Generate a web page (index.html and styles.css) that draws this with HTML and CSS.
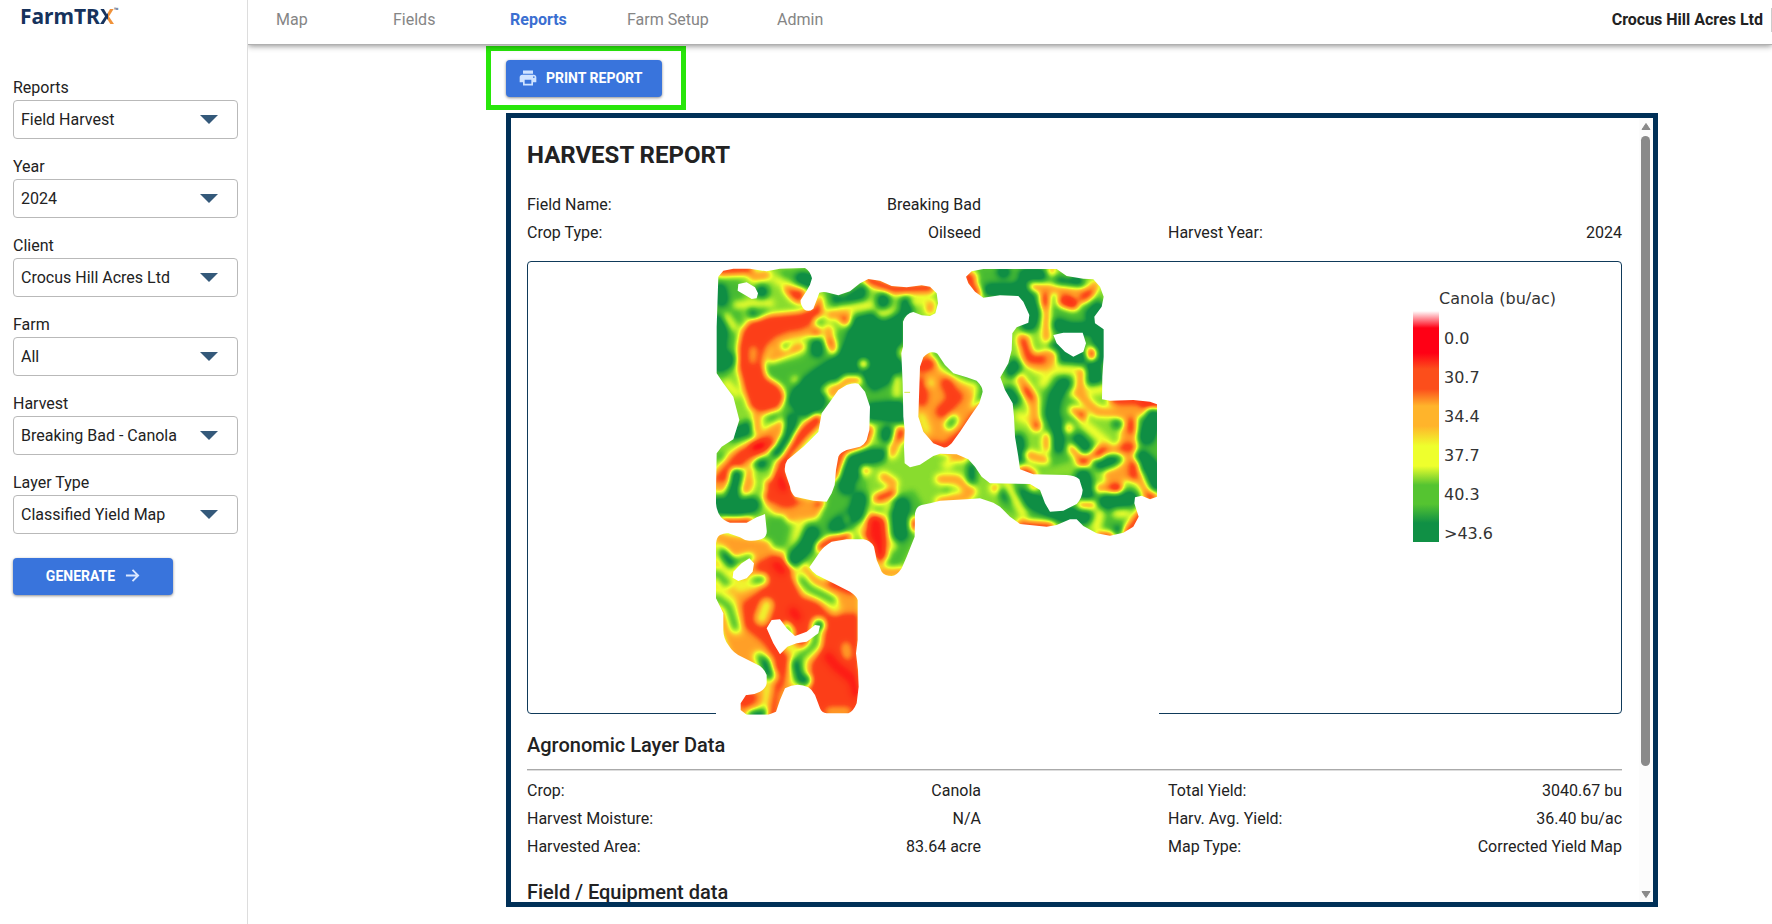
FILE: index.html
```html
<!DOCTYPE html>
<html lang="en">
<head>
<meta charset="utf-8">
<title>FarmTRX - Harvest Report</title>
<link rel="stylesheet" href="styles.css">
</head>
<body>
<aside class="sidebar">
  <a class="logo" href="#">FarmTR<span class="logo-x">X</span><span class="logo-tm">™</span></a>
  <form class="filters">
    <div class="field"><label for="reports">Reports</label>
      <div class="picker"><select id="reports"><option>Field Harvest</option></select><span class="arrow"></span></div></div>
    <div class="field"><label for="year">Year</label>
      <div class="picker"><select id="year"><option>2024</option></select><span class="arrow"></span></div></div>
    <div class="field"><label for="client">Client</label>
      <div class="picker"><select id="client"><option>Crocus Hill Acres Ltd</option></select><span class="arrow"></span></div></div>
    <div class="field"><label for="farm">Farm</label>
      <div class="picker"><select id="farm"><option>All</option></select><span class="arrow"></span></div></div>
    <div class="field"><label for="harvest">Harvest</label>
      <div class="picker"><select id="harvest"><option>Breaking Bad - Canola</option></select><span class="arrow"></span></div></div>
    <div class="field"><label for="layer">Layer Type</label>
      <div class="picker"><select id="layer"><option>Classified Yield Map</option></select><span class="arrow"></span></div></div>
    <button class="btn generate" type="button">GENERATE
      <svg class="icon-arrow" viewBox="0 0 16 16" aria-hidden="true"><path d="M1 8h13M8 2l6 6-6 6"/></svg>
    </button>
  </form>
</aside>
<div class="main">
  <header class="topbar">
    <nav class="nav">
      <a href="#">Map</a><a href="#">Fields</a><a href="#" class="active">Reports</a><a href="#">Farm Setup</a><a href="#">Admin</a>
    </nav>
    <div class="account">Crocus Hill Acres Ltd</div>
  </header>
  <main class="content">
    <div class="highlight">
      <button class="btn print" type="button">
        <svg class="icon-print" viewBox="0 0 24 24" aria-hidden="true"><path d="M19 8H5c-1.660 0-3 1.340-3 3v6h4v4h12v-4h4v-6c0-1.660-1.340-3-3-3zm-3 11H8v-5h8v5zm3-7c-.550 0-1-.450-1-1s.450-1 1-1 1 .450 1 1-.450 1-1 1zm-1-9H6v4h12V3z"/></svg>
        PRINT REPORT
      </button>
    </div>
    <section class="panel">
      <div class="report">
        <h1>HARVEST REPORT</h1>
        <div class="columns">
          <dl>
            <div><dt>Field Name:</dt><dd>Breaking Bad</dd></div>
            <div><dt>Crop Type:</dt><dd>Oilseed</dd></div>
          </dl>
          <dl class="bottom">
            <div><dt>Harvest Year:</dt><dd>2024</dd></div>
          </dl>
        </div>
        <div class="map-frame">
          <svg class="yield-map" viewBox="48 36 1329 1365" role="img" aria-label="Classified yield map">
            <defs>
              <filter id="classify" filterUnits="userSpaceOnUse" x="0" y="0" width="1440" height="1440" color-interpolation-filters="sRGB">
                <feGaussianBlur stdDeviation="9"/>
                <feComponentTransfer>
                  <feFuncR type="table" tableValues="1 .99 .99 1 1 .93 .62 .33 .2 .06 .06"/>
                  <feFuncG type="table" tableValues="0 .2 .27 .55 .72 1 .9 .77 .67 .56 .56"/>
                  <feFuncB type="table" tableValues=".08 .09 .1 .14 .17 .18 .18 .19 .22 .27 .27"/>
                </feComponentTransfer>
              </filter>
              <clipPath id="boundary">
                <path clip-rule="evenodd" d="M50 370V230L55 80 70 62 100 56 150 56 200 64 240 56 315 54Q330 62 336 85 332 105 320 122L302 150Q300 162 312 178 325 188 340 176L350 150 358 128Q372 124 385 128L415 136 450 124 480 100 505 87 540 92 575 108 620 112 665 106 690 110 710 130 714 160 706 190 690 198 665 196 640 186Q618 190 609 215V290L604 310 608 400 610 500 614 540 612 590 614 640 630 652 660 644 700 618 720 611 770 613 805 628 825 650 845 680 870 700 990 702 1020 720 1035 760 1050 785 1090 782 1130 762Q1146 745 1148 720L1138 688Q1125 676 1100 675L1000 673 960 658 955 620 945 560 942 500 938 460 915 420 901 382 925 340 935 300 937 250 950 232 985 218 988 195 970 155 955 138 900 136 850 143 825 125 805 100 798 80 815 64 850 57H1070L1100 78 1150 86 1180 88 1200 110 1211 140 1205 170 1183 200 1185 220 1211 238V320L1207 380 1206 448 1230 452 1300 450 1350 455 1371 463V740L1350 748 1325 737 1305 742 1303 760 1316 800 1300 830 1270 848 1230 857 1190 850 1150 828 1130 808H1110L1070 825 1040 830 960 822 930 800 900 770 880 758 840 745 800 748 720 752 690 760 665 765Q648 770 645 790L644 860 620 920 605 955Q590 978 575 978 555 978 545 965L530 930 522 890Q510 870 490 868H440L395 875Q370 890 360 905L328 952Q335 965 350 975L400 1000 450 1025Q470 1038 473 1050V1170L468 1210 474 1260 476 1310 470 1360Q460 1385 445 1390H380Q365 1388 360 1375L345 1335Q335 1318 325 1312 290 1295 255 1315L240 1350 228 1385 205 1394H140L122 1380V1360L138 1335Q160 1336 180 1325 198 1315 200 1300V1275Q195 1260 180 1248L125 1220Q100 1210 85 1185 70 1165 70 1140V1090L48 1045V880Q50 860 60 855 75 848 85 850L120 862Q135 873 150 872 175 873 190 865 202 855 200 840L195 792 170 802 140 818H90Q70 810 62 800 50 785 48 760V720L50 610 65 590 100 568 118 510 100 440 70 400Z
                M115 102L140 97 165 112 174 130 170 145 155 147 135 135 113 122Z
                M440 405Q460 398 475 401L495 425 510 470 508 540 500 570Q492 585 480 590L440 600Q420 608 415 620L408 660 404 705 395 730 380 755 340 752 285 740Q272 728 270 710L255 665Q252 645 262 630L310 590 355 545 365 490 390 455 415 420Z
                M660 350L670 322Q685 307 695 307 710 306 715 315L735 345 760 370 800 382 830 392Q848 410 848 425L838 460 810 500 780 545 755 580Q740 595 730 592L700 580 670 545 655 500Z
                M1060 255L1090 248H1148L1158 280 1150 305 1120 320 1095 305 1070 280Z
                M100 965L125 940 148 925 162 940 158 965 140 985 115 993 98 983Z
                M200 1135L215 1110 240 1108 260 1135 285 1158 320 1145 345 1125 360 1127 355 1150 320 1175 290 1180 262 1190 240 1213 220 1180Z"/>
              </clipPath>
            </defs>
            <g clip-path="url(#boundary)">
              <g filter="url(#classify)">
                <rect class="base" width="1440" height="1440"/>
                <!-- north-west block -->
                <path class="area g" d="M40 90H120L140 170 100 230 120 330 70 390 40 370ZM190 350L300 325 360 280 450 220 610 180V530L500 500 350 520 220 480 260 410 190 380ZM240 60H345V110L300 130 240 110ZM370 120L500 95V150L400 175Z"/>
                <path class="area d" d="M40 190L70 200 85 240 78 300 105 318 102 345 70 365H40ZM460 200L520 185 550 215 610 180V370L570 400 520 425 490 390 440 372 400 400 375 460 350 505 295 495 260 450 290 400 340 360 400 320 430 285 445 240ZM500 460L610 450V520L500 510ZM390 130L430 145 500 100 498 145 440 160 400 162ZM100 530L165 505 175 550 130 562 90 575ZM425 620L500 595 570 595 550 635 490 650 475 700 485 740 415 740Z"/>
                <path class="d w40" d="M550 148v10M620 160v20M305 85l25 8M185 125h1M165 185l20-4M350 285v20M60 120l5 30M275 510L262 555 232 605M107 670L98 740M560 545v15M600 480v20"/>
                <path class="g w24" d="M115 212h1M330 330h10M200 355L260 370 240 400"/>
                <path class="y w24" d="M285 390h1M375 420l20-15M80 400L110 430M590 385v50M605 300v15"/>
                <path class="a w30" d="M390 195L440 190 440 215M345 240L240 260 190 300M385 240L390 270 400 300M300 290L215 322M200 75L160 80M690 160v20M600 540L575 610M495 660h1M550 680l30 20M395 435L440 390 475 390M170 500v40"/>
                <path class="y w24" d="M510 165L420 175M540 190L570 185M300 120L230 90M210 160L110 165M640 155L680 150M80 200L100 230M355 215h1M255 285h1"/>
                <path class="area o" d="M148 212L200 195 300 185 340 170 362 130 370 190 335 225 300 240 265 245 225 262 195 290 190 340 200 380 240 405 258 440 240 478 190 492 150 478 130 420 112 350 112 290 125 240ZM245 112L320 120 305 165 275 150Z"/>
                <path class="a w24" d="M160 300L160 330M255 270L230 305"/>
                <path class="a w30" d="M490 342h1M495 660h1"/>
                <path class="g w24" d="M355 215h1M255 288h1M175 183h20"/>
                <path class="o w30" d="M60 62L145 58M505 90L580 118 690 114"/>
                <path class="o w24" d="M430 208h1M390 278h1M180 327h1M350 248h1"/>
                <path class="a w60" d="M240 540L180 590 110 630 60 690"/>
                <path class="o w40" d="M240 560L180 590 130 615 55 700M350 510L310 550 260 610 235 690 210 740"/>
                <path class="a w24" d="M240 520L225 560M150 660L130 720"/>
                <path class="g w30" d="M180 642L200 632M225 500l-10 5M60 620h1"/>
                <path class="d w30" d="M275 510L262 560 232 608M107 670L98 740M180 642h8"/>
                <path class="o w30" d="M505 540L490 580 430 600 408 660 400 735M605 545l-5 15"/>
                <path class="r w30" d="M185 585l-20 5M250 690v50"/>
                <!-- central plot -->
                <path class="area a" d="M640 290H860V600H640Z"/>
                <path class="g w30" d="M705 310L735 345 790 375 845 390 848 430 830 470"/>
                <path class="y w16" d="M715 350L750 378 810 405 825 430M690 390v15"/>
                <path class="o w40" d="M665 350L690 340M665 400V450M770 440L725 485M740 400l20 40"/>
                <path class="y w30" d="M690 400h1M665 500L680 540"/>
                <path class="g w30" d="M760 510l-12 15"/>
                <path class="o w30" d="M845 470L795 545 735 595 700 585"/>
                <!-- north-east block -->
                <g transform="translate(720 0)">
                  <path class="area g" d="M100 50H350L400 130 480 130 500 250V330L440 400 400 320 330 290V230L250 250 240 130H110ZM320 360L390 360 420 480 480 560 430 620 300 660V480ZM180 690L440 680 560 740 590 800 500 850 420 790 300 830 180 770ZM590 480L660 470V740H600Z"/>
                  <path class="d w40" d="M150 120H240L275 170 275 200M190 65h1M255 75L300 75M240 110L265 140M365 100L390 112 410 95M475 175L455 195M355 225L390 238 470 235M345 295L365 318 420 322M475 240L480 320M225 345L215 362M205 430L220 450M372 400L345 440 335 490 352 530 355 590M235 570L240 620M415 570L440 600M480 640L520 625"/>
                  <path class="d w50" d="M460 350L465 390M645 490L620 560M605 625L640 660 645 700M500 755L570 745M430 680L440 730M205 730L270 750 370 795 430 800M280 190L265 220"/>
                  <path class="d w24" d="M530 522h1M95 650V690M530 840h10"/>
                  <path class="y w30" d="M260 260L250 330M290 360L400 360M285 450V520L240 500M250 790L200 700M480 790L470 830M530 790h30M310 400L340 350M520 410L400 430M500 580L430 520"/>
                  <path class="a w30" d="M280 110L450 130 465 105M335 62h1M315 120L320 265M245 265L270 340 320 345M240 385L275 445 290 530M320 560V595M265 615L315 630M425 365L418 435 470 485 560 490M425 495L400 480M385 535h1M575 480L555 600 480 600 430 635 395 595M560 600L580 650 625 735M580 660L505 675 530 715 475 715M425 765h30M165 715h1M100 80L85 90M455 312h1"/>
                  <path class="a w50" d="M310 330L330 320M545 485L600 475M565 550V600M575 650L530 680"/>
                  <path class="a w30" d="M0 688H50L95 725M40 620H70M0 755L80 740M280 710h1"/>
                  <path class="y w30" d="M20 720h5M20 645h5"/>
                  <path class="o w30" d="M315 140V160M370 150L400 165M430 145L450 130M250 275L270 325 305 328M258 420L272 440M290 528h1M455 305V318M575 515V540M550 592H575M490 600L475 615M425 635h10M425 495h1M580 645V680M515 715H535M625 740H640M80 75L110 130M250 662L275 675M245 825L330 830M605 790L560 850M485 860H510M520 450H590L665 465"/>
                  <path class="o w40" d="M370 152L400 162"/>
                  <path class="r w16" d="M385 155h10M530 715h1M610 462h30"/>
                </g>
                <!-- southern block -->
                <g transform="translate(0 690)">
                  <path class="area a" d="M40 150L300 230 350 290 480 340V720H100V550L40 380ZM190 70L420 80 380 110 250 130Z"/>
                  <path class="area o" d="M165 250L215 225 260 240 285 290 305 350 350 358 390 400 480 400V720H365L320 610 260 600 235 640 225 720H195L175 650 215 620 225 540 190 490 130 440 125 370 180 330ZM195 0H270L290 55 400 60 420 85 300 80 250 85 200 60ZM480 160L510 100 550 110 570 150 550 220 540 270 515 200Z"/>
                  <path class="area g" d="M200 110L250 105 270 140 255 200 220 200 190 170ZM400 0H500V90L400 160 300 250 260 240 300 170 350 130ZM560 60L640 30 670 80 640 180 600 260 560 260Z"/>
                  <path class="y w40" d="M50 190L75 260 120 320 185 300M50 330L90 360 110 450M200 375L185 415M295 280L320 330 370 350 405 385M260 490L290 520 280 600M355 430L345 500 310 540 310 600M175 530L215 590"/>
                  <path class="y w30" d="M205 620L190 700 150 710M500 60L500 110 480 150M570 80L575 200M560 230V260M300 130L290 200"/>
                  <path class="g w24" d="M65 215L90 250 150 232M50 280L80 310M50 355L85 380 105 440M165 300L185 298M305 300L330 325 400 360M260 440L270 460M350 435L345 490 300 530 290 570 315 610M180 530L205 580M155 705L190 695M740 30h1M600 210L570 250"/>
                  <path class="a w30" d="M438 500L442 525M390 695H440M60 175L200 195M455 375h1M130 495L110 480M545 280L605 275M50 20H70M140 30L150 5M300 85L330 70"/>
                  <path class="o w40" d="M130 665L150 655"/>
                  <path class="y w24" d="M195 380L188 410"/>
                  <path class="d w50" d="M55 75L100 90 155 75M285 235L320 195 335 160M410 140L470 100 480 60M440 0V20M595 100L600 160M605 75V90"/>
                  <path class="d w24" d="M110 0L100 25M300 600L288 550M195 545L205 585M160 705H185M75 225L95 250M360 435h1M320 600h1"/>
                  <path class="g w24" d="M440 110v15"/>
                  <path class="o w30" d="M75 125H145M535 55L575 40M645 125v15M360 200L400 178 440 172M395 308L455 330"/>
                  <path class="rr w50" d="M525 130L535 180"/>
                  <path class="rr w40" d="M540 190V220M230 255L245 270M280 395L290 410M385 530L410 560 460 600 470 640M245 0L250 20"/>
                </g>
              </g>
            </g>
            <path class="speck" d="M614 427h15"/>
          </svg>
          <div class="legend">
            <div class="legend-title">Canola (bu/ac)</div>
            <div class="legend-bar"></div>
            <ul><li>0.0</li><li>30.7</li><li>34.4</li><li>37.7</li><li>40.3</li><li>&gt;43.6</li></ul>
          </div>
        </div>
        <h2>Agronomic Layer Data</h2>
        <hr>
        <div class="columns">
          <dl>
            <div><dt>Crop:</dt><dd>Canola</dd></div>
            <div><dt>Harvest Moisture:</dt><dd>N/A</dd></div>
            <div><dt>Harvested Area:</dt><dd>83.64 acre</dd></div>
          </dl>
          <dl>
            <div><dt>Total Yield:</dt><dd>3040.67 bu</dd></div>
            <div><dt>Harv. Avg. Yield:</dt><dd>36.40 bu/ac</dd></div>
            <div><dt>Map Type:</dt><dd>Corrected Yield Map</dd></div>
          </dl>
        </div>
        <h2>Field / Equipment data</h2>
      </div>
      <div class="scrollbar" aria-hidden="true">
        <svg viewBox="0 0 10 8"><path d="M5 1L9 7H1Z"/></svg>
        <div class="track"><div class="thumb"></div></div>
        <svg viewBox="0 0 10 8"><path d="M5 7L9 1H1Z"/></svg>
      </div>
    </section>
  </main>
</div>
</body>
</html>
```
FILE: styles.css
```css
* { box-sizing: border-box; }
body {
  margin: 0;
  height: 100vh;
  display: flex;
  overflow: hidden;
  background: #fff;
  color: #222;
  font: 16px/24px Roboto, sans-serif;
}
a { color: inherit; text-decoration: none; }

/* Sidebar */
.sidebar {
  flex: 0 0 248px;
  padding: 0 9px 0 13px;
  border-right: 1px solid #ddd;
}
.logo {
  display: flex;
  height: 76px;
  padding: 2px 0 0 7px;
  color: #16325c;
  font: 700 21px/28px "Noto Sans", sans-serif;
}
.logo-x {
  color: transparent;
  background: conic-gradient(at 56% 46%, #f0923a 0 90deg, #16325c 90deg);
  background-clip: text;
  -webkit-background-clip: text;
}
.logo-tm { font-size: 6px; line-height: 16px; }
.field { margin-bottom: 16px; }
.field label { display: block; height: 24px; line-height: 24px; }
.picker { display: grid; align-items: center; }
.picker select,
.picker .arrow { grid-area: 1 / 1; }
.picker select {
  appearance: none;
  width: 100%;
  height: 39px;
  padding: 0 36px 0 7px;
  border: 1px solid #b9b9b9;
  border-radius: 4px;
  background: #fff;
  color: #222;
  font: inherit;
}
.arrow {
  justify-self: end;
  margin-right: 20px;
  border: 9px solid transparent;
  border-top-color: #34597a;
  border-bottom: 0;
  pointer-events: none;
}
.btn {
  display: flex;
  align-items: center;
  height: 37px;
  border: 0;
  border-radius: 4px;
  background: #3974dc;
  box-shadow: 0 1px 3px rgba(0, 0, 0, .45);
  color: #fff;
  font: 700 14px/20px Roboto, sans-serif;
}
.generate { width: 160px; margin-top: 24px; padding: 0 0 2px; justify-content: center; gap: 10px; }
.icon-arrow { width: 15px; height: 15px; fill: none; stroke: #dbe8ff; stroke-width: 2; }
.print { width: 156px; padding: 0 0 2px 12px; gap: 8px; }
.icon-print { width: 20px; height: 20px; fill: #cfe3ff; }

/* Top bar */
.main { flex: 1; min-width: 0; display: flex; flex-direction: column; }
.topbar {
  display: flex;
  justify-content: space-between;
  height: 45px;
  padding: 8px 0 0 28px;
  border-bottom: 1px solid #b0b0b0;
  box-shadow: 0 1px 6px rgba(0, 0, 0, .45);
  clip-path: inset(0 0 -12px 0);
}
.nav { display: grid; grid-template-columns: 117px 117px 117px 150px auto; color: #858585; }
.nav .active { color: #3b6fd1; font-weight: 700; }
.account {
  height: 24px;
  padding-right: 8px;
  border-right: 1px solid #ccc;
  font-weight: 700;
}

/* Report */
.content {
  flex: 1;
  min-height: 0;
  display: flex;
  flex-direction: column;
  align-items: stretch;
  padding: 1px 114px 17px 258px;
}
.highlight {
  align-self: flex-start;
  margin: 0 0 3px -20px;
  padding: 9px 19px 8px 15px;
  border: 5px solid #28e60a;
}
.panel {
  flex: 1;
  min-height: 0;
  display: flex;
  border: 5px solid #003057;
}
.report { flex: 1; min-width: 0; padding: 21px 17px 0 16px; overflow: hidden; }
h1 { margin: 0 0 20px; font-size: 24px; line-height: 32px; font-weight: 700; }
h2 { margin: 17px 0 10px; font-size: 20px; line-height: 28px; font-weight: 500; }
hr { height: 2px; margin: 0 0 6px; border: 0; border-top: 1px solid #aaa; background: #ddd; }
.columns { display: grid; grid-template-columns: 1fr 1fr; column-gap: 187px; }
dl { margin: 0; }
dl div { display: flex; justify-content: space-between; line-height: 28px; }
dd { margin: 0; }
.bottom { align-self: end; }
.map-frame {
  display: flex;
  height: 453px;
  margin-top: 14px;
  border: 1px solid #0f3a5a;
  border-radius: 4px;
}
.yield-map { width: 443px; height: 455px; margin-left: 188px; background: #fff; }
.legend {
  display: grid;
  grid-template-columns: 26px auto;
  grid-template-rows: 24px 240px;
  margin: 25px auto 0 254px;
  color: #333;
  font: 16px/24px "DejaVu Sans", sans-serif;
}
.legend-title { grid-column: 2; }
.legend-bar {
  height: 231px;
  background: linear-gradient(#fff 0, #ff0015 17px 42px, #fc4e1b 58px 78px, #ffb42b 95px 115px, #eeff2d 135px 155px, #55c431 174px 193px, #109045 212px);
}
.legend ul { margin: 0; padding: 8px 0 0 5px; list-style: none; line-height: 39px; }

/* Yield classes, low (r) to high (d), as grey levels read by the classify filter */
.yield-map path { fill: none; stroke-linecap: round; stroke-linejoin: round; }
.yield-map .base { fill: #a0a0a0; }
.r { stroke: #000; }
.rr { stroke: #0e0e0e; }
.o { stroke: #2a2a2a; }
.a { stroke: #585858; }
.y { stroke: #7c7c7c; }
.g { stroke: #bcbcbc; }
.d { stroke: #fff; }
.yield-map .area { stroke: none; }
.yield-map .area.o { fill: #2a2a2a; }
.yield-map .area.a { fill: #585858; }
.yield-map .area.g { fill: #bcbcbc; }
.yield-map .area.d { fill: #fff; }
.w16 { stroke-width: 16px; }
.w24 { stroke-width: 24px; }
.w30 { stroke-width: 30px; }
.w40 { stroke-width: 40px; }
.w50 { stroke-width: 50px; }
.w60 { stroke-width: 60px; }
.yield-map .speck { stroke: #dbe64a; stroke-width: 3px; }

.scrollbar {
  flex: 0 0 14px;
  display: flex;
  flex-direction: column;
  align-items: center;
  padding: 4px 1px 3px 0;
  background: #fcfcfc;
}
.scrollbar svg { flex: none; width: 10px; height: 9px; fill: #8a8a8a; stroke: #8a8a8a; stroke-linejoin: round; }
.track { flex: 1; margin: 5px 0 4px; width: 9px; }
.thumb { height: 84%; border-radius: 5px; background: #8a8a8a; }
```
